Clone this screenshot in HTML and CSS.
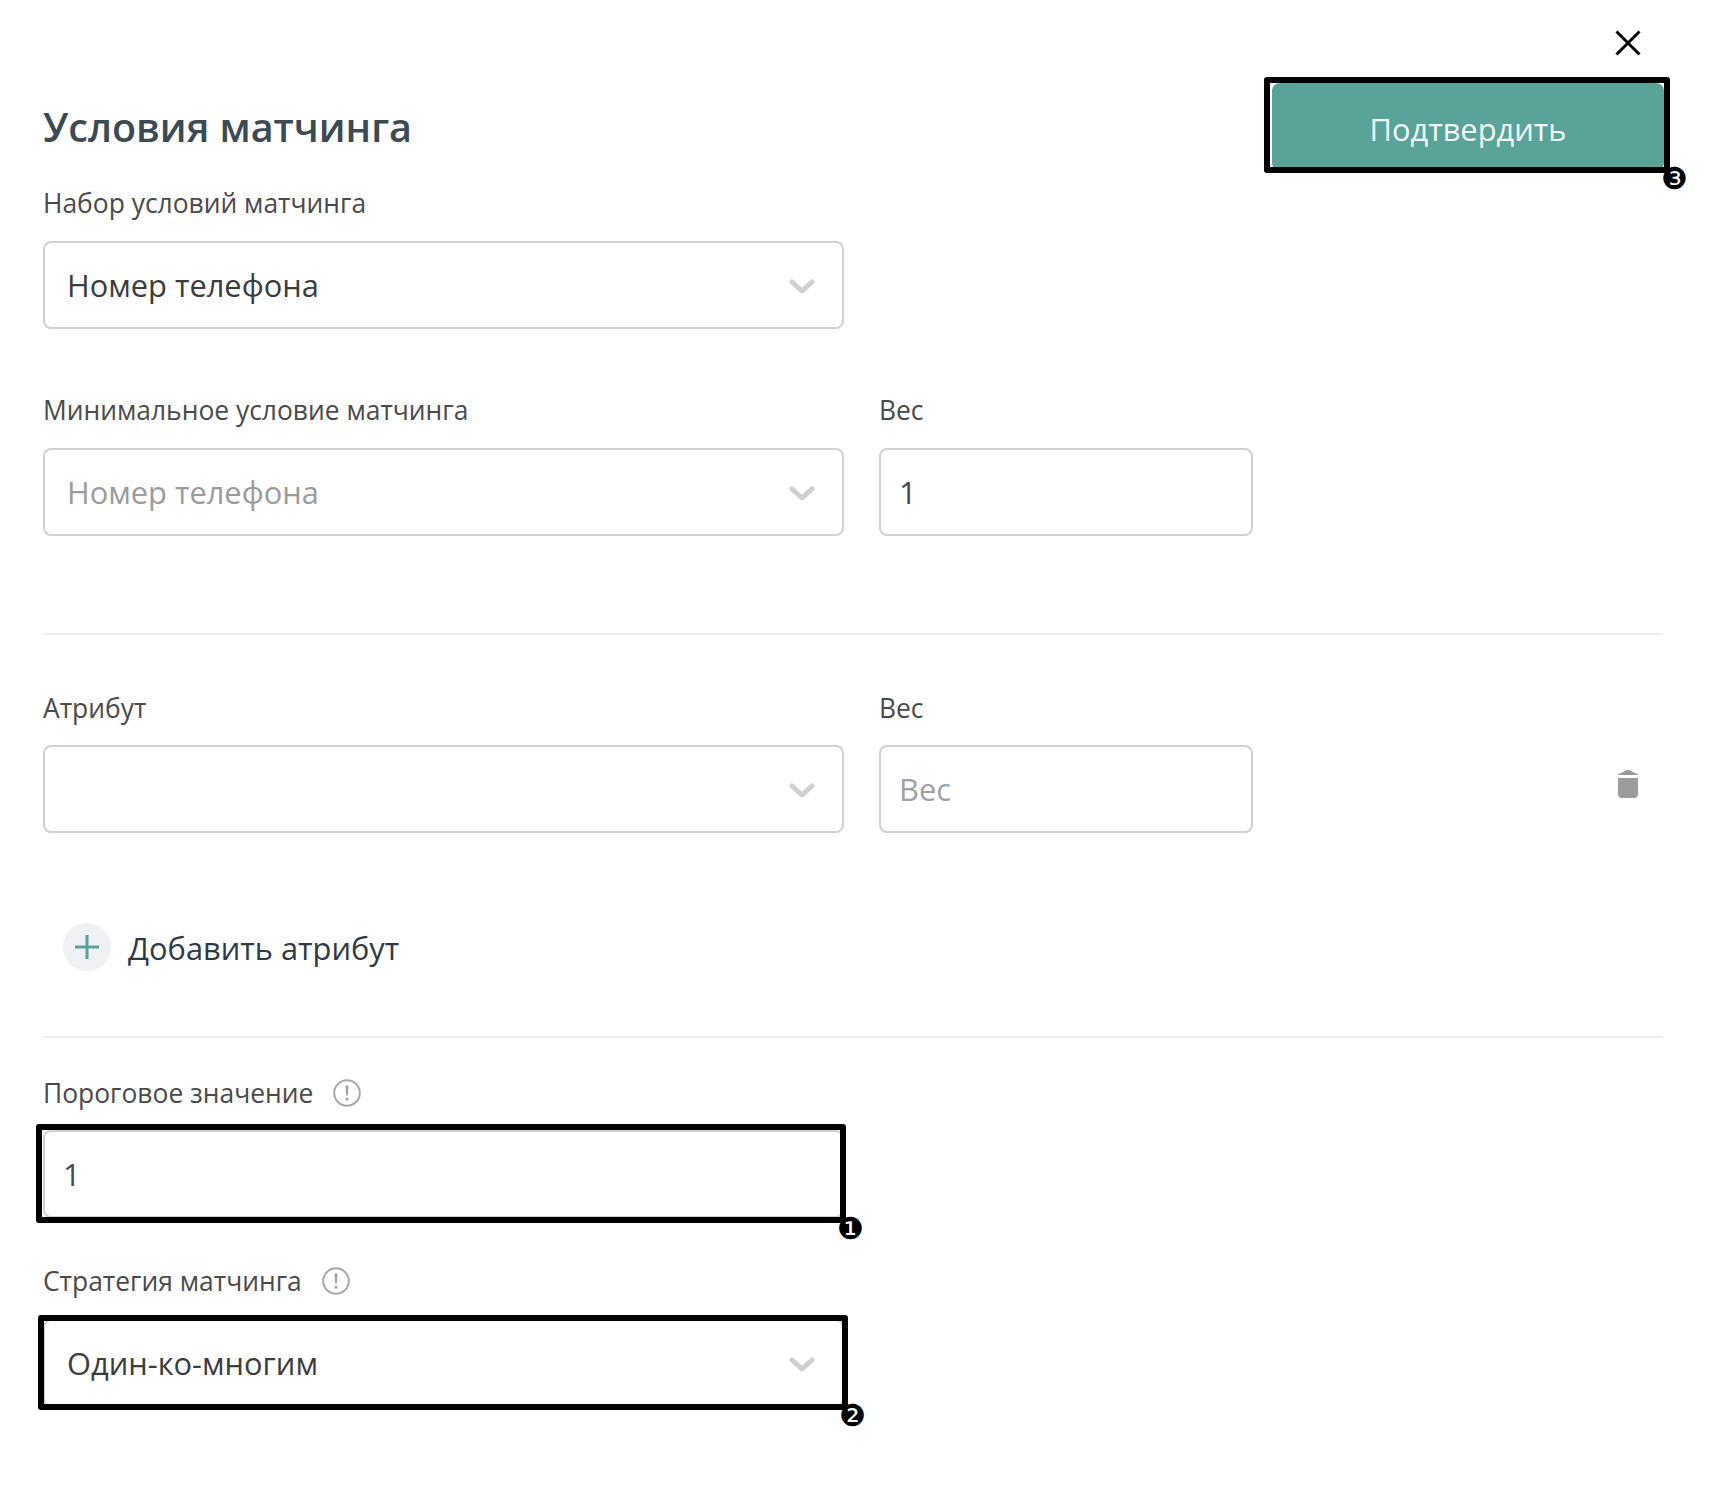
FILE: index.html
```html
<!DOCTYPE html>
<html lang="en">
<head>
  <meta charset="UTF-8">
  <meta name="viewport" content="width=device-width, initial-scale=1.0">
  <title>Условия матчинга</title>
  <link rel="stylesheet" href="styles.css">
</head>
<body>

<div class="close-row">
  <svg class="close" width="26" height="26" viewBox="0 0 26 26"><path d="M1.5 1.5 24.5 24.5M24.5 1.5 1.5 24.5"/></svg>
</div>

<div class="head">
  <h1>Условия матчинга</h1>
  <div class="marked">
    <button class="confirm">Подтвердить</button>
    <div class="mark mark-confirm"><span class="num">❸</span></div>
  </div>
</div>

<div class="label first">Набор условий матчинга</div>
<div class="row">
  <div class="select"><span class="value">Номер телефона</span>
    <svg class="chev" width="26" height="15" viewBox="0 0 26 15"><path d="M3 3 13 12 23 3"/></svg>
  </div>
</div>

<div class="row labels gap-top">
  <div class="label">Минимальное условие матчинга</div>
  <div class="label">Вес</div>
</div>
<div class="row">
  <div class="select muted"><span class="value">Номер телефона</span>
    <svg class="chev" width="26" height="15" viewBox="0 0 26 15"><path d="M3 3 13 12 23 3"/></svg>
  </div>
  <input class="input" type="text" value="1">
</div>

<hr class="line line-one">

<div class="row labels">
  <div class="label">Атрибут</div>
  <div class="label">Вес</div>
</div>
<div class="row">
  <div class="select">
    <svg class="chev" width="26" height="15" viewBox="0 0 26 15"><path d="M3 3 13 12 23 3"/></svg>
  </div>
  <input class="input" type="text" placeholder="Вес">
  <svg class="trash" width="24" height="30" viewBox="0 0 24 30"><path d="M1 7 8 3.500Q12 0 16 3.500L23 7ZM2 10H22V26Q22 30 18 30H6Q2 30 2 26Z"/></svg>
</div>

<div class="add">
  <span class="add-btn">
    <svg width="24" height="24" viewBox="0 0 24 24"><path d="M12 0V24M0 12H24"/></svg>
  </span>
  <span class="add-text">Добавить атрибут</span>
</div>

<hr class="line line-two">

<div class="label with-info">Пороговое значение
  <svg class="info" width="28" height="28" viewBox="0 0 28 28"><circle cx="14" cy="14" r="12.800"/><path d="M12.500 6.500H15.500L14.800 16.500H13.200ZM12.700 18.800H15.300V21.400H12.700Z"/></svg>
</div>
<div class="marked wide top-one">
  <input class="input full" type="text" value="1">
  <div class="mark mark-one"><span class="num">❶</span></div>
</div>

<div class="label with-info next">Стратегия матчинга
  <svg class="info" width="28" height="28" viewBox="0 0 28 28"><circle cx="14" cy="14" r="12.800"/><path d="M12.500 6.500H15.500L14.800 16.500H13.200ZM12.700 18.800H15.300V21.400H12.700Z"/></svg>
</div>
<div class="marked wide top-two">
  <div class="select"><span class="value">Один-ко-многим</span>
    <svg class="chev" width="26" height="15" viewBox="0 0 26 15"><path d="M3 3 13 12 23 3"/></svg>
  </div>
  <div class="mark mark-two"><span class="num">❷</span></div>
</div>

</body>
</html>
```

FILE: styles.css
```css
body {
  font-family: "Open Sans", sans-serif;
  background: #fff;
  margin: 0;
  padding: 30px 50px 40px 43px;
  color: #333;
}

.close-row {
  display: flex;
  justify-content: flex-end;
  padding-right: 23px;
  height: 26px;
}
.close path {
  fill: none;
  stroke: #000;
  stroke-width: 3;
}

.head {
  display: flex;
  justify-content: space-between;
  align-items: center;
  margin-top: 27px;
}
h1 {
  font-size: 39.500px;
  line-height: 56px;
  font-weight: 600;
  color: #3c4a54;
  margin: 0;
}

.marked { position: relative; }
.wide { width: 801px; }

.confirm {
  display: block;
  width: 392px;
  height: 88px;
  padding: 4px 0 0;
  font-family: inherit;
  font-size: 30.800px;
  color: #f2f7f6;
  background: #59a399;
  border: none;
  border-radius: 8px;
}

.mark {
  position: absolute;
  border: 6px solid #000;
  border-radius: 3px;
}
.mark-confirm { left: -8px; right: -6px; top: -6px; bottom: -2px; }
.mark-one { left: -7px; right: -2px; top: -6px; bottom: -5px; }
.mark-two { left: -5px; right: -4px; top: -4px; bottom: -3px; }
.num {
  position: absolute;
  right: -24px;
  bottom: -30px;
  font-family: "DejaVu Sans", sans-serif;
  font-size: 30px;
  line-height: 36px;
  color: #000;
}

.label {
  font-size: 26.400px;
  line-height: 32px;
  color: #4a4a4a;
}
.first { margin-top: 16px; margin-bottom: 22px; }

.row {
  display: flex;
  gap: 35px;
}
.labels { margin-bottom: 21px; }
.labels .label:first-child { width: 801px; }
.gap-top { margin-top: 65px; margin-bottom: 22px; }

.select {
  position: relative;
  box-sizing: border-box;
  display: flex;
  align-items: center;
  width: 801px;
  height: 88px;
  padding-left: 22px;
  font-size: 30.800px;
  color: #3c3c3c;
  border: 2px solid #cfd0d3;
  border-radius: 8px;
}
.value { margin-top: -1px; }
.muted { color: #9b9b9b; }
.chev {
  position: absolute;
  right: 27px;
  top: 36px;
}
.chev path {
  fill: none;
  stroke: #cfcfcf;
  stroke-width: 5;
  stroke-linecap: round;
  stroke-linejoin: round;
}

.input {
  box-sizing: border-box;
  width: 374px;
  height: 88px;
  padding: 0 18px 1px;
  font-family: inherit;
  font-size: 30.800px;
  color: #4a4a4a;
  background: #fff;
  border: 2px solid #cfd0d3;
  border-radius: 8px;
  outline: none;
}
.input::placeholder {
  color: #9aa2ab;
  opacity: 1;
}
.full {
  display: block;
  width: 801px;
}

.trash {
  margin-left: auto;
  margin-right: 24px;
  margin-top: 23px;
  fill: #9b9b9b;
}

.line {
  border: none;
  height: 2px;
  background: #eeeeee;
  margin: 0 1px 0 0;
}
.line-one { margin-top: 97px; margin-bottom: 57px; }
.line-two { margin-top: 64px; margin-bottom: 39px; }

.add {
  display: flex;
  align-items: center;
  gap: 17px;
  margin-top: 88px;
  padding-left: 20px;
  font-size: 30.800px;
  line-height: 48px;
  color: #2f3a45;
}
.add-text { margin-top: 3px; }
.add-btn {
  display: flex;
  align-items: center;
  justify-content: center;
  width: 48px;
  height: 48px;
  border-radius: 50%;
  background: #eff1f4;
}
.add-btn path {
  fill: none;
  stroke: #5aa399;
  stroke-width: 3;
}

.with-info {
  display: flex;
  align-items: center;
  gap: 20px;
}
.info circle {
  fill: none;
  stroke: #a8a8a8;
  stroke-width: 2;
}
.info path {
  fill: #a0a0a0;
}
.top-one { margin-top: 21px; }
.next { margin-top: 47px; }
.top-two { margin-top: 22px; }
```
